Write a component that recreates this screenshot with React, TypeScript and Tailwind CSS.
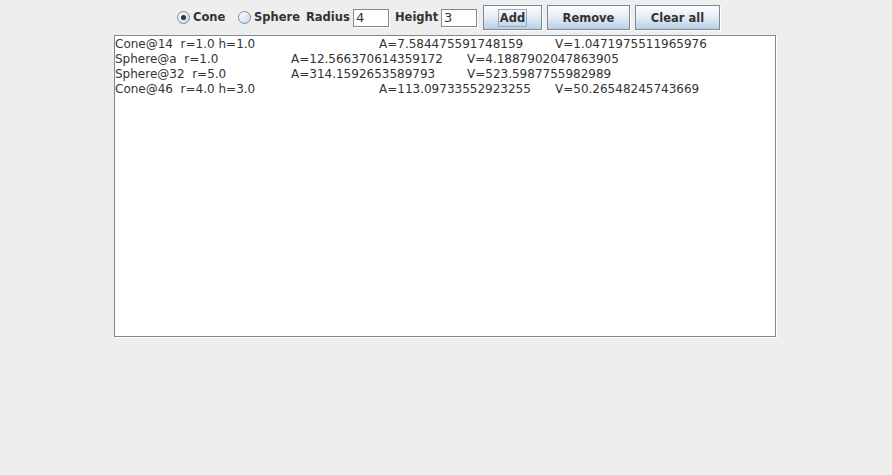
import React from "react";

const rows = [
  "Cone@14  r=1.0 h=1.0\t\tA=7.584475591748159\tV=1.0471975511965976",
  "Sphere@a  r=1.0\tA=12.566370614359172\tV=4.1887902047863905",
  "Sphere@32  r=5.0\tA=314.1592653589793\tV=523.5987755982989",
  "Cone@46  r=4.0 h=3.0\t\tA=113.09733552923255\tV=50.26548245743669",
];

function Radio({
  checked,
  label,
  className,
}: {
  checked?: boolean;
  label: string;
  className: string;
}) {
  return (
    <label className={"flex shrink-0 items-center gap-[3px] " + className}>
      <span className="flex h-[13px] w-[13px] shrink-0 items-center justify-center rounded-full border border-[#7a8a99] bg-gradient-to-br from-white to-[#c8d6e6]">
        {checked && (
          <span className="h-[5px] w-[5px] rounded-full bg-[#333333]" />
        )}
      </span>
      <span className="font-bold text-[#333333]">{label}</span>
    </label>
  );
}

function Button({
  label,
  focus,
  className,
}: {
  label: string;
  focus?: boolean;
  className: string;
}) {
  return (
    <button
      className={
        "flex h-[25px] shrink-0 items-center justify-center border border-[#7a8a99] bg-gradient-to-b from-white via-[#e3ebf4] to-[#b8cfe5] font-bold text-[#333333] shadow-[1px_1px_0_white] " +
        className
      }
    >
      <span
        className={
          focus
            ? "border border-[#99a8c2] px-[1px] leading-[16px]"
            : "border border-transparent px-[1px] leading-[16px]"
        }
      >
        {label}
      </span>
    </button>
  );
}

export default function App() {
  return (
    <main
      className="h-[475px] w-[892px] bg-[#eeeeee] text-[12px]"
      style={{ fontFamily: '"DejaVu Sans", sans-serif' }}
    >
      <div className="flex items-center pt-[5px] pb-[5px] pl-[177px] text-[11.5px]">
        <Radio checked label="Cone" className="w-[49px]" />
        <Radio label="Sphere" className="ml-[12px] w-[60px]" />
        <span className="ml-[8px] w-[43px] shrink-0 font-bold text-[#333333]">
          Radius
        </span>
        <input
          defaultValue="4"
          className="ml-[4px] h-[18px] w-[36px] shrink-0 border border-[#7a8a99] bg-white px-[2px] text-[13px] text-[#333333] outline-none shadow-[1px_1px_0_white]"
        />
        <span className="ml-[6px] w-[42px] shrink-0 font-bold text-[#333333]">
          Height
        </span>
        <input
          defaultValue="3"
          className="ml-[4px] h-[18px] w-[36px] shrink-0 border border-[#7a8a99] bg-white px-[2px] text-[13px] text-[#333333] outline-none shadow-[1px_1px_0_white]"
        />
        <Button label="Add" focus className="ml-[6px] w-[59px]" />
        <Button label="Remove" className="ml-[5px] w-[83px]" />
        <Button label="Clear all" className="ml-[5px] w-[85px]" />
      </div>

      <div className="ml-[114px] h-[302px] w-[662px] border border-[#7a8a99] bg-white shadow-[1px_1px_0_white]">
        <div className="whitespace-pre pt-[1px] leading-[15px] text-[#333333] [tab-size:88px]">
          {rows.map((r) => (
            <div key={r}>{r}</div>
          ))}
        </div>
      </div>
    </main>
  );
}
